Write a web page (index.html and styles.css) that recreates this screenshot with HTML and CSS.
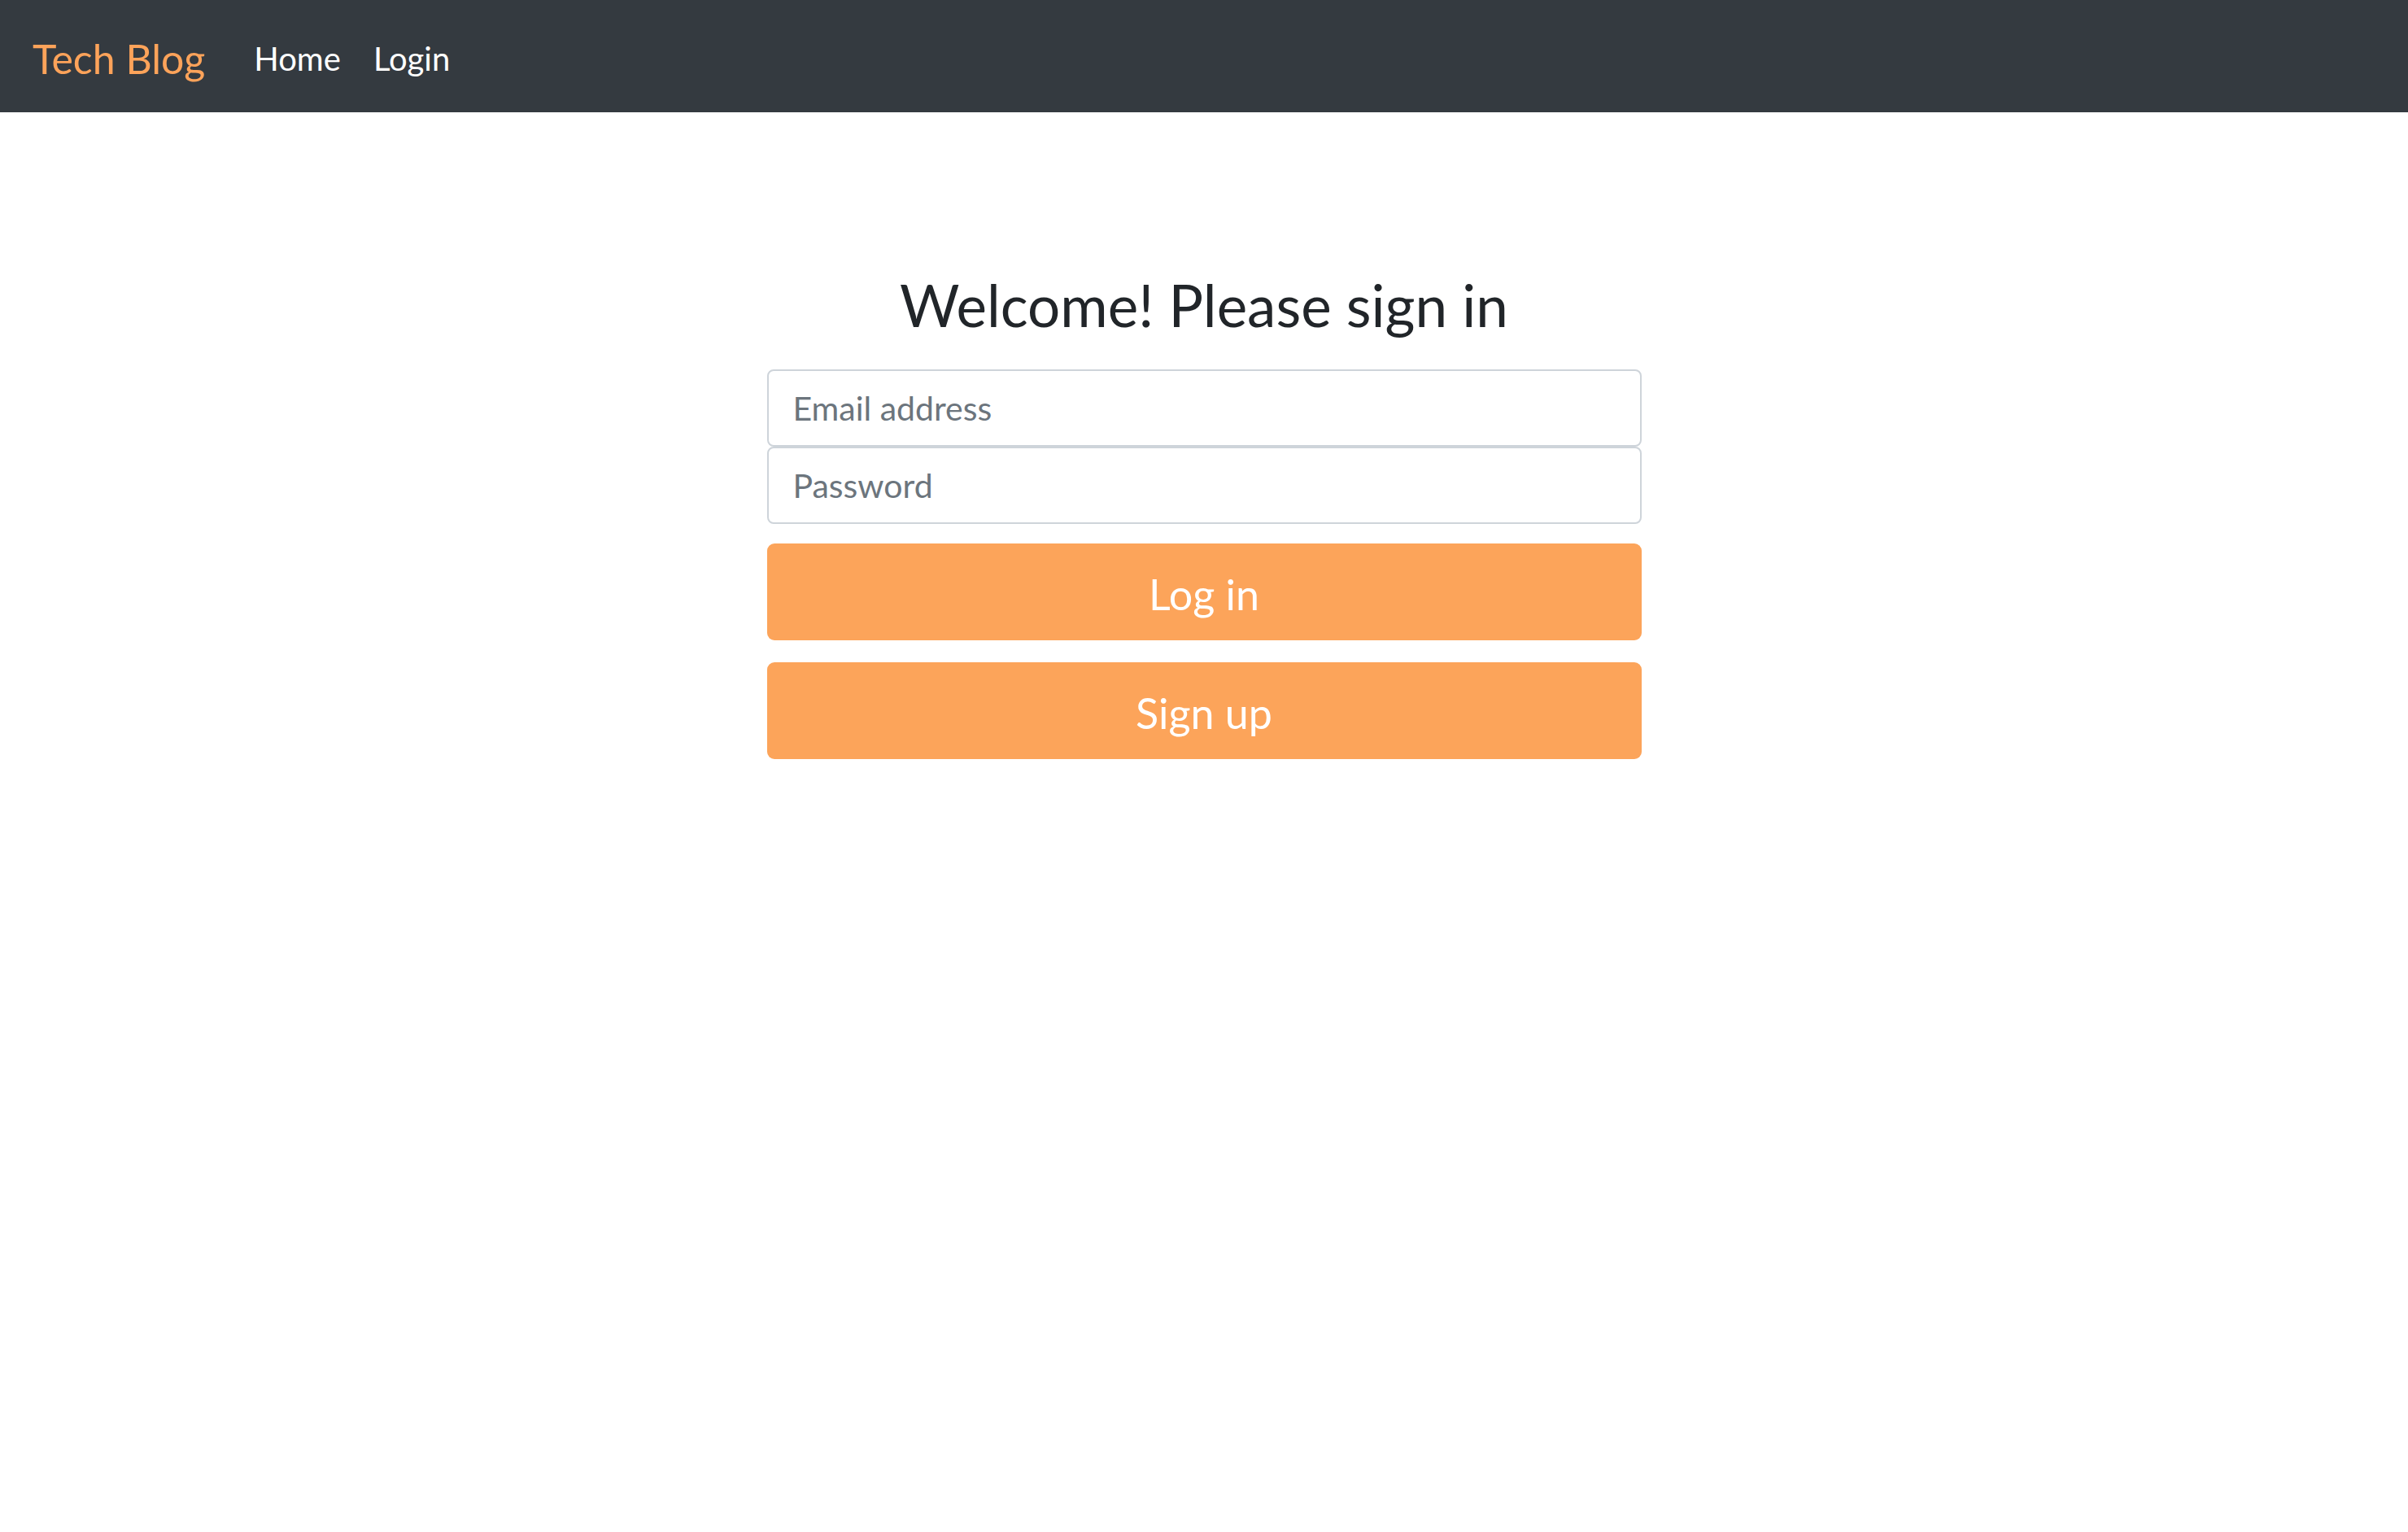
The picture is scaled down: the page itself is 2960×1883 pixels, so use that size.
FILE: index.html
```html
<!DOCTYPE html>
<html lang="en">
<head>
<meta charset="utf-8">
<title>Tech Blog</title>
<link rel="stylesheet" href="styles.css">
</head>
<body>
<nav class="navbar">
  <a class="brand" href="#">Tech Blog</a>
  <ul class="nav-links">
    <li><a class="nav-link" href="#">Home</a></li>
    <li><a class="nav-link" href="#">Login</a></li>
  </ul>
</nav>
<main class="page">
  <form class="signin">
    <h1 class="signin-title">Welcome! Please sign in</h1>
    <div class="fields">
      <input class="field" type="email" placeholder="Email address">
      <input class="field" type="password" placeholder="Password">
    </div>
    <div class="actions">
      <button class="btn" type="button">Log in</button>
      <button class="btn" type="button">Sign up</button>
    </div>
  </form>
</main>
</body>
</html>
```
FILE: styles.css
```css
* { box-sizing: border-box; }
html, body { margin: 0; padding: 0; background: #fff; }
body { font-family: Lato, "Open Sans", sans-serif; color: #212529; }

.navbar {
  display: flex;
  align-items: center;
  height: 138px;
  padding: 6px 0 0 40px;
  background: #343a40;
}
.brand {
  font-size: 50px;
  line-height: 75px;
  color: #fda35a;
  text-decoration: none;
  margin-right: 40px;
}
.nav-links {
  display: flex;
  list-style: none;
  margin: 0;
  padding: 0;
}
.nav-link {
  display: block;
  padding: 0 20px;
  font-size: 40px;
  line-height: 60px;
  color: #fff;
  text-decoration: none;
}
.nav-links li + li .nav-link { padding-right: 22px; }

.page {
  display: flex;
  justify-content: center;
  padding-top: 195px;
}
.signin {
  width: 1075px;
  display: flex;
  flex-direction: column;
}
.signin-title {
  margin: 0 0 37px;
  font-size: 71px;
  font-weight: 400;
  line-height: 84px;
  text-align: center;
  color: #212529;
}
.fields {
  display: flex;
  flex-direction: column;
}
.field {
  height: 95px;
  width: 100%;
  padding: 0 30px;
  border: 2px solid #ced4da;
  border-radius: 8px;
  font-family: Lato, "Open Sans", sans-serif;
  font-size: 41px;
  color: #495057;
  background: #fff;
  outline: none;
}
.field::placeholder { color: #6c757d; opacity: 1; }

.actions {
  display: flex;
  flex-direction: column;
  gap: 27px;
  margin-top: 24px;
}
.btn {
  height: 119px;
  width: 100%;
  padding: 4px 0 0;
  border: 0;
  border-radius: 9px;
  background: #fca45a;
  color: #fff;
  font-family: Lato, "Open Sans", sans-serif;
  font-size: 52px;
  cursor: pointer;
}
```
